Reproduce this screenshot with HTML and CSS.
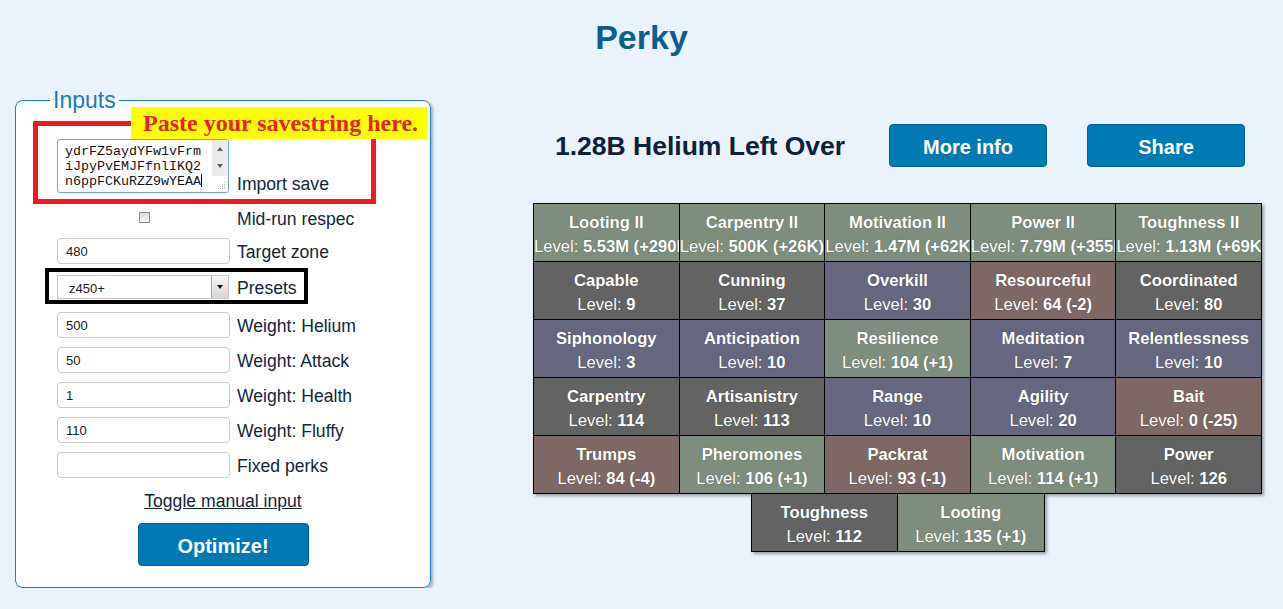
FILE: index.html
```html
<!DOCTYPE html>
<html lang="en">
<head>
<meta charset="utf-8">
<title>Perky</title>
<link rel="stylesheet" href="styles.css">
</head>
<body>
<h1 class="title">Perky</h1>
<div class="main">
  <fieldset class="inputs">
    <legend class="inputs-legend">Inputs</legend>
    <div class="save-box">
      <div class="paste-hint">Paste your savestring here.</div>
      <div class="row row-save">
        <div class="savetext">
          <div class="savetext-lines">ydrFZ5aydYFw1vFrm<br>iJpyPvEMJFfnlIKQ2<br>n6ppFCKuRZZ9wYEAA<span class="caret"></span></div>
          <div class="savetext-scroll">
            <div class="scroll-track">
              <span class="tri-up"></span>
              <span class="tri-down"></span>
            </div>
            <div class="grip">
              <svg width="8" height="8" viewBox="0 0 8 8"><g fill="#b5b5b5"><rect x="6" y="0" width="1" height="1"/><rect x="4" y="2" width="1" height="1"/><rect x="6" y="2" width="1" height="1"/><rect x="2" y="4" width="1" height="1"/><rect x="4" y="4" width="1" height="1"/><rect x="6" y="4" width="1" height="1"/><rect x="0" y="6" width="1" height="1"/><rect x="2" y="6" width="1" height="1"/><rect x="4" y="6" width="1" height="1"/><rect x="6" y="6" width="1" height="1"/></g></svg>
            </div>
          </div>
        </div>
        <label class="label">Import save</label>
      </div>
    </div>
    <div class="row row-check">
      <div class="field-slot"><span class="checkbox"></span></div>
      <label class="label">Mid-run respec</label>
    </div>
    <div class="row row-target">
      <input class="field" type="text" value="480">
      <label class="label">Target zone</label>
    </div>
    <div class="preset-box">
      <div class="select">
        <span class="select-text">z450+</span>
        <span class="select-arrow"><span class="tri-down dark"></span></span>
      </div>
      <label class="label">Presets</label>
    </div>
    <div class="row row-first">
      <input class="field" type="text" value="500">
      <label class="label">Weight: Helium</label>
    </div>
    <div class="row">
      <input class="field" type="text" value="50">
      <label class="label">Weight: Attack</label>
    </div>
    <div class="row">
      <input class="field" type="text" value="1">
      <label class="label">Weight: Health</label>
    </div>
    <div class="row">
      <input class="field" type="text" value="110">
      <label class="label">Weight: Fluffy</label>
    </div>
    <div class="row">
      <input class="field" type="text" value="">
      <label class="label">Fixed perks</label>
    </div>
    <div class="toggle-wrap"><a class="toggle" href="#">Toggle manual input</a></div>
    <div class="optimize-wrap"><button class="btn btn-optimize">Optimize!</button></div>
  </fieldset>

  <section class="results">
    <div class="summary">
      <div class="helium">1.28B Helium Left Over</div>
      <button class="btn btn-wide">More info</button>
      <button class="btn btn-wide btn-share">Share</button>
    </div>
    <div class="perk-grid">
      <div class="perk green"><div class="perk-name">Looting II</div><div class="perk-level">Level: <b>5.53M (+290K)</b></div></div>
      <div class="perk green"><div class="perk-name">Carpentry II</div><div class="perk-level">Level: <b>500K (+26K)</b></div></div>
      <div class="perk green"><div class="perk-name">Motivation II</div><div class="perk-level">Level: <b>1.47M (+62K)</b></div></div>
      <div class="perk green"><div class="perk-name">Power II</div><div class="perk-level">Level: <b>7.79M (+355K)</b></div></div>
      <div class="perk green"><div class="perk-name">Toughness II</div><div class="perk-level">Level: <b>1.13M (+69K)</b></div></div>

      <div class="perk gray"><div class="perk-name">Capable</div><div class="perk-level">Level: <b>9</b></div></div>
      <div class="perk gray"><div class="perk-name">Cunning</div><div class="perk-level">Level: <b>37</b></div></div>
      <div class="perk purple"><div class="perk-name">Overkill</div><div class="perk-level">Level: <b>30</b></div></div>
      <div class="perk brown"><div class="perk-name">Resourceful</div><div class="perk-level">Level: <b>64 (-2)</b></div></div>
      <div class="perk gray"><div class="perk-name">Coordinated</div><div class="perk-level">Level: <b>80</b></div></div>

      <div class="perk purple"><div class="perk-name">Siphonology</div><div class="perk-level">Level: <b>3</b></div></div>
      <div class="perk purple"><div class="perk-name">Anticipation</div><div class="perk-level">Level: <b>10</b></div></div>
      <div class="perk green"><div class="perk-name">Resilience</div><div class="perk-level">Level: <b>104 (+1)</b></div></div>
      <div class="perk purple"><div class="perk-name">Meditation</div><div class="perk-level">Level: <b>7</b></div></div>
      <div class="perk purple"><div class="perk-name">Relentlessness</div><div class="perk-level">Level: <b>10</b></div></div>

      <div class="perk gray"><div class="perk-name">Carpentry</div><div class="perk-level">Level: <b>114</b></div></div>
      <div class="perk gray"><div class="perk-name">Artisanistry</div><div class="perk-level">Level: <b>113</b></div></div>
      <div class="perk purple"><div class="perk-name">Range</div><div class="perk-level">Level: <b>10</b></div></div>
      <div class="perk purple"><div class="perk-name">Agility</div><div class="perk-level">Level: <b>20</b></div></div>
      <div class="perk brown"><div class="perk-name">Bait</div><div class="perk-level">Level: <b>0 (-25)</b></div></div>

      <div class="perk brown"><div class="perk-name">Trumps</div><div class="perk-level">Level: <b>84 (-4)</b></div></div>
      <div class="perk green"><div class="perk-name">Pheromones</div><div class="perk-level">Level: <b>106 (+1)</b></div></div>
      <div class="perk brown"><div class="perk-name">Packrat</div><div class="perk-level">Level: <b>93 (-1)</b></div></div>
      <div class="perk green"><div class="perk-name">Motivation</div><div class="perk-level">Level: <b>114 (+1)</b></div></div>
      <div class="perk gray"><div class="perk-name">Power</div><div class="perk-level">Level: <b>126</b></div></div>
    </div>
    <div class="perk-grid perk-grid-extra">
      <div class="perk gray"><div class="perk-name">Toughness</div><div class="perk-level">Level: <b>112</b></div></div>
      <div class="perk green"><div class="perk-name">Looting</div><div class="perk-level">Level: <b>135 (+1)</b></div></div>
    </div>
  </section>
</div>
</body>
</html>
```

FILE: styles.css
```css
html, body {
  margin: 0;
  padding: 0;
}
body {
  background: #eaf2fc;
  font-family: "Liberation Sans", Arial, sans-serif;
  color: #13263a;
}

.title {
  margin: 0;
  padding-top: 18px;
  font-size: 34px;
  line-height: 38px;
  font-weight: bold;
  text-align: center;
  color: #0a5f8e;
}

.main {
  display: flex;
  align-items: flex-start;
  margin-top: 31px;
  padding-left: 15px;
}

/* ---------- Inputs panel ---------- */
.inputs {
  box-sizing: border-box;
  width: 416px;
  margin: 0;
  padding: 0 0 21px 0;
  min-inline-size: 0;
  border: 1px solid #1d80c0;
  border-radius: 8px;
  background: #fff;
  box-shadow: 2px 2px 3px rgba(0, 60, 110, 0.35);
}
.inputs-legend {
  margin-left: 34px;
  padding: 0 3px;
  font-size: 23px;
  line-height: 26px;
  color: #1a7ab8;
}

.row {
  display: flex;
  align-items: center;
  margin-left: 41px;
  margin-top: 9px;
  height: 26px;
}
.label {
  margin-left: 7px;
  font-size: 17.6px;
  line-height: 20px;
  color: #13263a;
  white-space: nowrap;
}

.save-box {
  position: relative;
  box-sizing: border-box;
  width: 343px;
  height: 83px;
  margin: 8px 0 0 17px;
  padding: 13px 0 0 19px;
  border: 5px solid #ed1c24;
}
.paste-hint {
  position: absolute;
  left: 93px;
  top: -19px;
  padding: 0 9px 0 12px;
  background: #ffff00;
  color: #e8222a;
  font-family: "Liberation Serif", "Times New Roman", serif;
  font-weight: bold;
  font-size: 24px;
  line-height: 32px;
  white-space: nowrap;
}
.row-save {
  margin: 0;
  height: auto;
  align-items: flex-end;
}
.row-save .label {
  margin-left: 8px;
  margin-bottom: -1px;
  line-height: 20px;
}
.savetext {
  box-sizing: border-box;
  display: flex;
  width: 172px;
  height: 54px;
  border: 1px solid #6fa6d8;
  border-radius: 3px;
  background: #fff;
  overflow: hidden;
}
.savetext-lines {
  flex: 1;
  padding: 5px 0 0 7px;
  font-family: "Liberation Mono", "Courier New", monospace;
  font-size: 13.33px;
  line-height: 14.5px;
  color: #151515;
  white-space: nowrap;
}
.caret {
  display: inline-block;
  width: 1px;
  height: 13px;
  background: #000;
  vertical-align: -2px;
}
.savetext-scroll {
  width: 16px;
  display: flex;
  flex-direction: column;
}
.scroll-track {
  flex: 1;
  background: #ebebeb;
  display: flex;
  flex-direction: column;
  align-items: center;
  padding-top: 7px;
  gap: 13px;
}
.grip {
  height: 14px;
  display: flex;
  align-items: flex-end;
  justify-content: flex-end;
  padding: 0 2px 2px 0;
  background: #fff;
}
.tri-up {
  width: 0;
  height: 0;
  border-left: 3.5px solid transparent;
  border-right: 3.5px solid transparent;
  border-bottom: 4px solid #606060;
}
.tri-down {
  width: 0;
  height: 0;
  border-left: 3.5px solid transparent;
  border-right: 3.5px solid transparent;
  border-top: 4px solid #606060;
}
.tri-down.dark {
  border-top-color: #111;
}

.row-check {
  margin-top: 1px;
}
.field-slot {
  width: 173px;
  display: flex;
  justify-content: center;
}
.checkbox {
  box-sizing: border-box;
  width: 11px;
  height: 11px;
  margin-left: 1px;
  margin-top: -2px;
  border: 1px solid #8c8c8c;
  background: linear-gradient(#dcdcdc, #f6f6f6);
}
.row-target {
  margin-top: 7px;
}
.row-first {
  margin-top: 8px;
}
.field {
  box-sizing: border-box;
  width: 173px;
  height: 26px;
  margin: 0;
  padding: 1px 0 0 8px;
  border: 1px solid #cbcbcb;
  border-radius: 4px;
  background: #fff;
  font-family: "Liberation Sans", Arial, sans-serif;
  font-size: 13px;
  color: #1a1a1a;
  outline: none;
}
.row .label {
  padding-top: 1px;
}

.preset-box {
  display: inline-flex;
  align-items: center;
  margin: 4px 0 0 29px;
  padding: 3px 7px 1px 8px;
  border: 4px solid #000;
}
.preset-box .label {
  margin-left: 8px;
  padding-top: 1px;
}
.select {
  box-sizing: border-box;
  display: flex;
  align-items: center;
  width: 172px;
  height: 24px;
  border: 1px solid #c6c6c6;
  background: #fff;
  font-size: 13px;
  color: #1a1a1a;
}
.select-text {
  flex: 1;
  padding-left: 11px;
  padding-top: 2px;
}
.select-arrow {
  box-sizing: border-box;
  width: 17px;
  height: 100%;
  display: flex;
  align-items: center;
  justify-content: center;
  border-left: 1px solid #a9a9a9;
  background: linear-gradient(#f6f6f6, #d6d6d6);
}

.toggle-wrap {
  margin-top: 13px;
  text-align: center;
  font-size: 17.6px;
  line-height: 20px;
}
.toggle {
  color: #13263a;
  text-decoration: underline;
}
.optimize-wrap {
  margin-top: 12px;
  display: flex;
  justify-content: center;
}

.btn {
  box-sizing: border-box;
  height: 43px;
  border: 1px solid #04608f;
  border-radius: 4px;
  background: #0079b5;
  color: #fff;
  font-family: "Liberation Sans", Arial, sans-serif;
  font-weight: bold;
  font-size: 20px;
  padding: 3px 0 0;
  cursor: pointer;
}
.btn-optimize {
  width: 171px;
}
.btn-wide {
  width: 158px;
}
.btn-share {
  margin-left: 40px;
}

/* ---------- Results ---------- */
.results {
  width: 729px;
  margin-left: 102px;
  padding-top: 37px;
}
.summary {
  display: flex;
  align-items: center;
  height: 43px;
}
.helium {
  box-sizing: border-box;
  width: 356px;
  padding-left: 22px;
  padding-top: 2px;
  font-size: 26.5px;
  font-weight: bold;
  color: #0d2137;
  white-space: nowrap;
}

.perk-grid {
  display: grid;
  grid-template-columns: repeat(5, 1fr);
  grid-auto-rows: 57px;
  gap: 1px;
  margin-top: 36px;
  border: 1px solid #000;
  background: #000;
  box-shadow: 2px 2px 3px rgba(0, 0, 0, 0.35);
}
.perk-grid-extra {
  grid-template-columns: repeat(2, 1fr);
  width: 292px;
  margin: -1px auto 0;
}
.perk {
  overflow: hidden;
  white-space: nowrap;
  text-align: center;
  color: #fff;
  padding-top: 7px;
  font-size: 16.6px;
  line-height: 24px;
  text-shadow: 0 0 1px rgba(0, 0, 0, 0.45);
}
.perk-name {
  font-weight: bold;
}
.perk-level b {
  font-weight: bold;
}
.green { background: #7e8e7e; }
.gray { background: #636363; }
.purple { background: #66667f; }
.brown { background: #7e6866; }
```
